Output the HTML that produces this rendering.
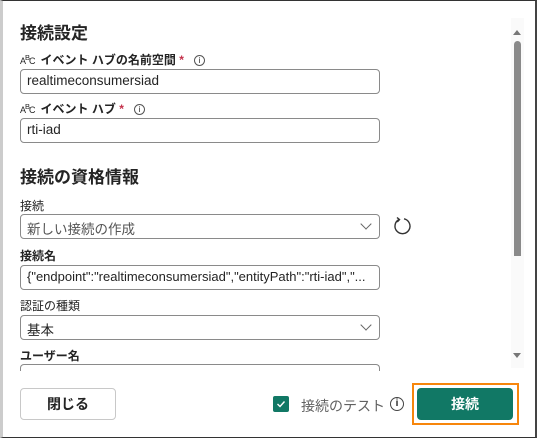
<!DOCTYPE html><html><head><meta charset="utf-8"><style>
*{box-sizing:border-box;margin:0;padding:0}
body{width:537px;height:438px;background:#fff;font-family:"Liberation Sans","Noto Sans CJK JP",sans-serif;color:#242424;position:relative;overflow:hidden}
.frame{position:absolute;left:0;top:0;width:537px;height:438px;border:1px solid #333;border-left:3px solid #ccc;border-right:2px solid #444}
.a{position:absolute}
h2{position:absolute;font-size:17px;font-weight:bold;left:20px}
.lbl{position:absolute;left:20px;font-size:12px;font-weight:bold}
.in{position:absolute;left:20px;width:360px;height:25px;border:1px solid #8a8a8a;border-radius:4px;font-size:13.5px;padding:3px 6px;white-space:nowrap;overflow:hidden}
.chev{position:absolute;right:9px;top:5px;width:8px;height:8px;border-right:1.3px solid #666;border-bottom:1.3px solid #666;transform:rotate(45deg)}
.info{display:inline-block;width:11px;height:11px;border:1px solid #555;border-radius:50%;font-size:8px;text-align:center;line-height:9px;font-weight:normal;vertical-align:1px}
.abc{font-size:9px;font-weight:normal;letter-spacing:-1px;margin-right:6px}
</style></head><body>
<div class="frame"></div>
<h2 style="top:19px">接続設定</h2>
<div class="lbl" style="top:51px"><span class="abc">A<sup>B</sup>C</span>イベント ハブの名前空間 <span style="color:#c4314b">*</span> &nbsp; <span class="info">i</span></div>
<div class="in" style="top:69px">realtimeconsumersiad</div>
<div class="lbl" style="top:100px"><span class="abc">A<sup>B</sup>C</span>イベント ハブ <span style="color:#c4314b">*</span> &nbsp; <span class="info">i</span></div>
<div class="in" style="top:118px">rti-iad</div>
<h2 style="top:163px">接続の資格情報</h2>
<div class="lbl" style="top:197px;font-weight:normal">接続</div>
<div class="in" style="top:214px;color:#555">新しい接続の作成<div class="chev"></div></div>
<svg class="a" style="left:392px;top:215px" width="22" height="22" viewBox="0 0 22 22"><path d="M7 4.5A7.5 7.5 0 1 0 12 3.8" fill="none" stroke="#333" stroke-width="1.4"/><path d="M5 2.5L7.5 4.6L5.2 7" fill="none" stroke="#333" stroke-width="1.4"/></svg>
<div class="lbl" style="top:247px">接続名</div>
<div class="in" style="top:265px;font-size:13px">{"endpoint":"realtimeconsumersiad","entityPath":"rti-iad","...</div>
<div class="lbl" style="top:297px;font-weight:normal">認証の種類</div>
<div class="in" style="top:315px">基本<div class="chev"></div></div>
<div class="lbl" style="top:347px">ユーザー名</div>
<div class="in" style="top:364px;height:5px;border-bottom:none;border-radius:4px 4px 0 0"></div>
<div class="a" style="left:511px;top:18px;width:13px;height:350px;background:#fafafa"></div>
<div class="a" style="left:513px;top:30px;border:4px solid transparent;border-bottom:5px solid #777;border-top:0;width:0"></div>
<div class="a" style="left:514px;top:41px;width:7px;height:215px;background:#8a8a8a;border-radius:4px 4px 0 0"></div>
<div class="a" style="left:513px;top:353px;border:4px solid transparent;border-top:5px solid #777;border-bottom:0;width:0"></div>
<div class="a" style="left:20px;top:388px;width:96px;height:32px;border:1px solid #c8c8c8;border-radius:4px;font-size:14px;font-weight:bold;text-align:center;line-height:30px">閉じる</div>
<div class="a" style="left:273px;top:396px;width:16px;height:16px;background:#117865;border-radius:2px"><svg width="16" height="16"><path d="M4.5 8L7 10.5L11.5 5.5" fill="none" stroke="#fff" stroke-width="1.4"/></svg></div>
<div class="a" style="left:301px;top:396px;font-size:14px;color:#616161">接続のテスト</div>
<div class="a" style="left:390px;top:397px;width:14px;height:14px;border:1.3px solid #444;border-radius:50%;font-size:10px;text-align:center;line-height:12px;font-weight:bold">i</div>
<div class="a" style="left:412px;top:383px;width:107px;height:42px;border:2px solid #f7860c"></div>
<div class="a" style="left:417px;top:388px;width:96px;height:32px;background:#117865;border-radius:4px;color:#fff;font-size:14px;font-weight:bold;text-align:center;line-height:32px">接続</div>
</body></html>
